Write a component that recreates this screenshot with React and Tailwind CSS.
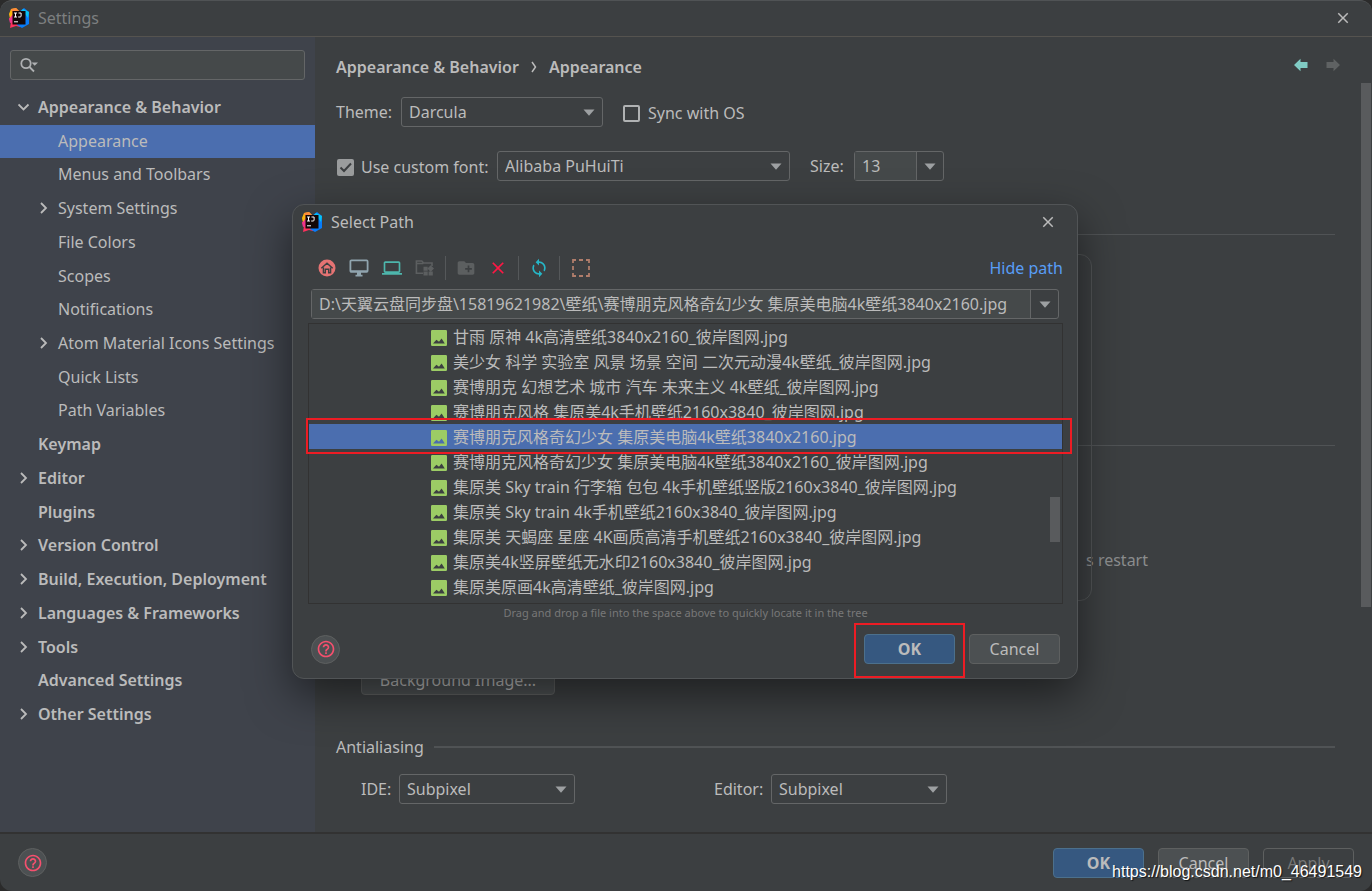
import React from 'react';
import clsx from 'clsx';
import {
  MdClose,
  MdCreateNewFolder,
  MdHelpOutline,
  MdLaptop,
  MdSync,
} from 'react-icons/md';

const menu = [
  { label: 'Appearance & Behavior', level: 0, state: 'open' },
  { label: 'Appearance', level: 1, active: true },
  { label: 'Menus and Toolbars', level: 1 },
  { label: 'System Settings', level: 1, state: 'closed' },
  { label: 'File Colors', level: 1 },
  { label: 'Scopes', level: 1 },
  { label: 'Notifications', level: 1 },
  { label: 'Atom Material Icons Settings', level: 1, state: 'closed' },
  { label: 'Quick Lists', level: 1 },
  { label: 'Path Variables', level: 1 },
  { label: 'Keymap', level: 0 },
  { label: 'Editor', level: 0, state: 'closed' },
  { label: 'Plugins', level: 0 },
  { label: 'Version Control', level: 0, state: 'closed' },
  { label: 'Build, Execution, Deployment', level: 0, state: 'closed' },
  { label: 'Languages & Frameworks', level: 0, state: 'closed' },
  { label: 'Tools', level: 0, state: 'closed' },
  { label: 'Advanced Settings', level: 0 },
  { label: 'Other Settings', level: 0, state: 'closed' },
];

const files = [
  '甘雨 原神 4k高清壁纸3840x2160_彼岸图网.jpg',
  '美少女 科学 实验室 风景 场景 空间 二次元动漫4k壁纸_彼岸图网.jpg',
  '赛博朋克 幻想艺术 城市 汽车 未来主义 4k壁纸_彼岸图网.jpg',
  '赛博朋克风格 集原美4k手机壁纸2160x3840_彼岸图网.jpg',
  '赛博朋克风格奇幻少女 集原美电脑4k壁纸3840x2160.jpg',
  '赛博朋克风格奇幻少女 集原美电脑4k壁纸3840x2160_彼岸图网.jpg',
  '集原美 Sky train 行李箱 包包 4k手机壁纸竖版2160x3840_彼岸图网.jpg',
  '集原美 Sky train 4k手机壁纸2160x3840_彼岸图网.jpg',
  '集原美 天蝎座 星座 4K画质高清手机壁纸2160x3840_彼岸图网.jpg',
  '集原美4k竖屏壁纸无水印2160x3840_彼岸图网.jpg',
  '集原美原画4k高清壁纸_彼岸图网.jpg',
];
const selectedFile = files[4];

function Logo() {
  return (
    <svg viewBox="0 0 20 20" className="w-5 h-5 shrink-0" aria-hidden="true">
      <path d="M0 6 2 1 7 0l4 4-5 8-5-1Z" fill="#fdb60d" />
      <path d="M2 1 7 0l4 4-7 3Z" fill="#ff8a3c" />
      <path d="M0 10h6l7 8-2 1-4-1-6 2 1-6Z" fill="#fe315d" />
      <path d="M0 11 5 5v9l-4 1Z" fill="#f0348b" />
      <path d="m10 4 5-4 5 4v12l-7 4-5-3Z" fill="#087cfa" />
      <path d="m14 1 6 3-1 6-3-4-5-2Z" fill="#07c3f2" />
      <rect x="3.5" y="3" width="13" height="13.5" fill="#120708" />
      <path d="M5 5h3M6.5 5v4M5 9h3M9.5 5h2.6v3q0 1-1 1H9.2" stroke="#fff" strokeWidth="1" fill="none" />
      <path d="M5 13.8h4" stroke="#fff" strokeWidth="1" />
    </svg>
  );
}

function Chevron({ open }) {
  return (
    <svg viewBox="0 0 12 12" className="w-3 h-3" fill="none" stroke="#bbbbbb" strokeWidth="1.8" aria-hidden="true">
      <path d={open ? 'M0.5 3.5 5.5 8.5l5-5' : 'M3 1 8 6l-5 5'} />
    </svg>
  );
}

function Triangle() {
  return (
    <svg viewBox="0 0 12 7" className="w-3 h-[7px]" fill="#9da0a2" aria-hidden="true">
      <path d="M0.5 0.5h11L6 6.7Z" />
    </svg>
  );
}

function ImageIcon() {
  return (
    <svg viewBox="0 0 16 16" className="w-4 h-4 shrink-0" aria-hidden="true">
      <path
        fillRule="evenodd"
        fill="#9ccc65"
        d="M1.2 0h13.6Q16 0 16 1.2v13.6q0 1.2-1.2 1.2H1.2Q0 16 0 14.8V1.2Q0 0 1.2 0ZM2 13.4h11.8L10.6 8.4 8 11.8 5.4 9.8Z"
      />
    </svg>
  );
}

function HomeIcon() {
  return (
    <svg viewBox="0 0 18 18" className="w-[18px] h-[18px]" aria-hidden="true">
      <circle cx="9" cy="9" r="8.5" fill="#e57373" />
      <path d="M3.3 9.3 9 4.2l5.7 5.1M5.4 8.6v5.2h1.9v-3.6h3.4v3.6h1.9V8.6" fill="none" stroke="#3c3f41" strokeWidth="1.4" />
    </svg>
  );
}

function DesktopIcon() {
  return (
    <svg viewBox="0 0 20 18" className="w-5 h-[18px]" fill="none" stroke="#90a4ae" strokeWidth="1.8" aria-hidden="true">
      <rect x="1.4" y="1.4" width="17.2" height="11.4" rx="1" />
      <path d="M1.4 12.2h17.2M6.5 16.6h7" />
      <path d="M8 13h4v4H8z" fill="#90a4ae" stroke="none" />
    </svg>
  );
}

function ModuleIcon() {
  return (
    <svg viewBox="0 0 20 18" className="w-5 h-[18px]" fill="none" stroke="#5c5f60" strokeWidth="1.6" aria-hidden="true">
      <path d="M8 14.2H1.4V2h5.4l1.8 2H17v3M1.4 4.5h7" />
      <path d="M8.5 7.8h4.2v4H8.5zM8.5 12.6h4.2v4H8.5zM13.6 12.6h4.2v4h-4.2z" fill="#5c5f60" stroke="none" />
      <path d="m15.7 6.3 3.3 3.3-3.3 3.3-3.3-3.3Z" fill="#5c5f60" stroke="none" />
    </svg>
  );
}

function DashedSquare() {
  return (
    <svg viewBox="0 0 18 18" className="w-[18px] h-[18px]" fill="none" stroke="#b07d6b" strokeWidth="1.8" aria-hidden="true">
      <path d="M1 4V1h3M7 1h4M14 1h3v3M17 7v4M17 14v3h-3M11 17H7M4 17H1v-3M1 11V7" />
    </svg>
  );
}

function Arrow({ className, flip }) {
  return (
    <svg viewBox="0 0 14 14" className={clsx('w-3.5 h-3.5', className)} fill="currentColor" aria-hidden="true">
      <path d={flip ? 'M14 7 7.5.8V4H.5v6h7v3.2Z' : 'M0 7 6.5.8V4h7v6h-7v3.2Z'} />
    </svg>
  );
}

function Select({ id, label, value, className }) {
  return (
    <span className={clsx('relative inline-flex items-center', className)}>
      <select
        id={id}
        aria-label={label}
        defaultValue={value}
        className="appearance-none w-full h-[30px] rounded-[3px] border border-[#646667] bg-[#3c3f41] pl-[7px] text-base text-[#bbbbbb]"
      >
        <option>{value}</option>
      </select>
      <span className="absolute right-2 pointer-events-none flex">
        <Triangle />
      </span>
    </span>
  );
}

function Button({ children, variant = 'default', className = 'w-[91px]' }) {
  return (
    <button
      type="button"
      className={clsx(
        'h-[30px] rounded border text-base leading-none',
        variant === 'primary' && 'bg-[#365880] border-[#4c708c] text-[#bbbbbb] font-bold',
        variant === 'default' && 'bg-[#4c5052] border-[#5e6060] text-[#bbbbbb]',
        variant === 'disabled' && 'bg-[#3c3f41] border-[#5e6060] text-[#777777]',
        className
      )}
    >
      {children}
    </button>
  );
}

function HelpButton() {
  return (
    <button
      type="button"
      aria-label="Help"
      className="flex w-[29px] h-[29px] items-center justify-center rounded-full border border-[#5e6060] bg-[#4c5052] text-[#f5506e]"
    >
      <MdHelpOutline className="w-5 h-5" />
    </button>
  );
}

function Sidebar() {
  return (
    <aside className="w-[315px] shrink-0 bg-[#3f434b]">
      <div className="relative mx-2.5 mt-[13px] flex items-center">
        <input
          type="search"
          aria-label="Search settings"
          className="h-[30px] w-full rounded-[3px] border border-[#646667] bg-[#45494a] pl-9 text-base text-[#bbbbbb]"
        />
        <svg viewBox="0 0 18 16" className="absolute left-2.5 w-[18px] h-4" fill="none" stroke="#afb1b3" strokeWidth="1.8" aria-hidden="true">
          <circle cx="6" cy="6.5" r="4.7" />
          <path d="m9.5 10 4.5 4.5" />
          <path d="M11.5 5.5H18L14.7 8.8Z" fill="#afb1b3" stroke="none" />
        </svg>
      </div>
      <ul className="mt-[11px] grid h-[641px] auto-rows-fr">
        {menu.map((item) => (
          <li key={item.label}>
            <a
              href="#"
              className={clsx(
                'flex h-full items-center pb-0.5 text-base text-[#bbbbbb]',
                item.level === 0 ? 'pl-[18px] font-semibold' : 'pl-[38px]',
                item.active && 'bg-[#4b6eaf]'
              )}
            >
              <span className="w-5 shrink-0">{item.state && <Chevron open={item.state === 'open'} />}</span>
              {item.label}
            </a>
          </li>
        ))}
      </ul>
    </aside>
  );
}

function AppearancePage() {
  return (
    <main className="relative flex-1 pl-[21px] pr-[37px] text-base text-[#bbbbbb]">
      <div className="-mr-[5px] flex h-[60px] items-center justify-between">
        <div className="flex items-center gap-3 font-semibold">
          <span>Appearance &amp; Behavior</span>
          <svg viewBox="0 0 6 12" className="w-1.5 h-3" fill="none" stroke="#bbbbbb" strokeWidth="1.5" aria-hidden="true">
            <path d="m1 1 3.5 5L1 11" />
          </svg>
          <span>Appearance</span>
        </div>
        <div className="flex gap-[18px] pb-1">
          <button type="button" aria-label="Back"><Arrow className="text-[#80cbc4]" /></button>
          <button type="button" aria-label="Forward"><Arrow flip className="text-[#5f6263]" /></button>
        </div>
      </div>

      <div className="flex items-center">
        <label htmlFor="theme" className="w-[65px]">Theme:</label>
        <Select id="theme" value="Darcula" className="w-[202px]" />
        <label className="ml-5 flex items-center gap-2 pt-0.5">
          <input type="checkbox" className="appearance-none w-[17px] h-[17px] border-2 border-[#b0b2b3] rounded-[2px]" />
          Sync with OS
        </label>
      </div>

      <div className="mt-6 flex items-center">
        <label className="flex w-[161px] items-center gap-[7px] pl-px pt-0.5">
          <span className="relative flex">
            <input type="checkbox" defaultChecked className="appearance-none w-[17px] h-[17px] bg-[#9a9c9d] rounded-[2px]" />
            <svg viewBox="0 0 17 17" className="absolute inset-0 pointer-events-none" fill="none" stroke="#3c3f41" strokeWidth="2" aria-hidden="true">
              <path d="m3.5 8.5 3.5 3.5L14 4.5" />
            </svg>
          </span>
          Use custom font:
        </label>
        <Select id="font" label="Font" value="Alibaba PuHuiTi" className="w-[293px]" />
        <label htmlFor="size" className="ml-5 w-11">Size:</label>
        <div className="flex h-[30px] w-[90px] rounded-[3px] border border-[#646667]">
          <input id="size" defaultValue="13" className="w-[61px] bg-[#45494a] pl-[7px]" />
          <button type="button" aria-label="Size list" className="flex flex-1 items-center justify-center border-l border-[#646667]">
            <Triangle />
          </button>
        </div>
      </div>

      <div className="mt-[53px] h-[211px] border-t border-[#505355]" />
      <div className="h-[220px] border-t border-[#505355] pt-[102px] pr-[187px] text-right text-[#8b8d8e]">s restart</div>
      <Button className="ml-[25px] w-[194px]">Background Image...</Button>

      <div className="mt-10 flex items-center gap-2.5">
        <span>Antialiasing</span>
        <span className="h-0.5 flex-1 bg-[#505355]" />
      </div>
      <div className="mt-[15px] flex items-center pl-[25px]">
        <label htmlFor="ide" className="w-[38px]">IDE:</label>
        <Select id="ide" value="Subpixel" className="w-[176px]" />
        <label htmlFor="editor" className="ml-[139px] w-[57px]">Editor:</label>
        <Select id="editor" value="Subpixel" className="w-[176px]" />
      </div>

      <div className="absolute right-px top-[46px] h-[524px] w-2.5 bg-[#595b5d]" />
    </main>
  );
}

function PathDialog() {
  return (
    <section
      role="dialog"
      aria-label="Select Path"
      className="relative w-[786px] rounded-xl border border-[#515456] bg-[#3c3f41] pl-[15px] pr-3.5 pb-3.5 text-base text-[#bbbbbb] shadow-[0_16px_44px_rgba(0,0,0,0.5)]"
    >
      <header className="-ml-1.5 flex h-[35px] items-center gap-[9px] pb-0.5 pr-1.5">
        <Logo />
        <h2 className="flex-1">Select Path</h2>
        <button type="button" aria-label="Close dialog">
          <MdClose className="w-[18px] h-[18px]" />
        </button>
      </header>

      <div className="mt-4 flex h-6 items-center pl-2.5">
        <div className="flex items-center gap-[13px]">
          <button type="button" aria-label="Home"><HomeIcon /></button>
          <button type="button" aria-label="Desktop"><DesktopIcon /></button>
          <button type="button" aria-label="Project" className="text-[#4db6ac]"><MdLaptop className="w-5 h-5" /></button>
          <button type="button" aria-label="Module"><ModuleIcon /></button>
        </div>
        <span className="mx-2.5 h-6 w-px bg-[#55585a]" />
        <div className="flex items-center gap-3">
          <button type="button" aria-label="New folder" className="text-[#5c5f60]"><MdCreateNewFolder className="w-5 h-5" /></button>
          <button type="button" aria-label="Delete" className="text-[#ff1744]"><MdClose className="w-5 h-5" /></button>
        </div>
        <span className="mx-2.5 h-6 w-px bg-[#55585a]" />
        <button type="button" aria-label="Refresh" className="text-[#26b6c6]"><MdSync className="w-5 h-5" /></button>
        <span className="mx-2.5 h-6 w-px bg-[#55585a]" />
        <button type="button" aria-label="Show hidden files" className="ml-0.5"><DashedSquare /></button>
        <a href="#" className="ml-auto text-[#589df6]">Hide path</a>
      </div>

      <div className="mt-[9px] ml-[3px] mr-1 flex h-[30px] rounded-[3px] border border-[#646667]">
        <input
          aria-label="Path"
          defaultValue={'D:\\天翼云盘同步盘\\15819621982\\壁纸\\' + selectedFile}
          className="min-w-0 flex-1 bg-[#45494a] pl-[7px]"
        />
        <button type="button" aria-label="Recent paths" className="flex w-7 items-center justify-center border-l border-[#646667]">
          <Triangle />
        </button>
      </div>

      <div className="relative mt-1 border border-[#323232] pb-1">
        <ul>
          {files.map((file) => (
            <li
              key={file}
              className={clsx('relative flex h-[25px] items-center gap-1.5 pl-[122px] pt-0.5', file === selectedFile && 'bg-[#4b6eaf]')}
            >
              <ImageIcon />
              <span className="whitespace-nowrap leading-[23px]">{file}</span>
              {file === selectedFile && (
                <span className="absolute -left-[3px] -right-2.5 -top-1.5 -bottom-[5px] z-10 border-2 border-[#ed1c24]" />
              )}
            </li>
          ))}
        </ul>
        <div className="absolute right-0.5 top-[173px] h-[45px] w-2.5 bg-[#595b5d]" />
      </div>
      <p className="mt-px text-center text-[11px] leading-4 text-[#787878]">
        Drag and drop a file into the space above to quickly locate it in the tree
      </p>

      <footer className="mt-[13px] flex items-center justify-between pl-[3px] pr-[3px]">
        <HelpButton />
        <div className="flex gap-3.5">
          <div className="relative">
            <Button variant="primary">OK</Button>
            <span className="absolute -inset-x-2.5 -top-[11px] -bottom-3.5 border-2 border-[#ed1c24]" />
          </div>
          <Button>Cancel</Button>
        </div>
      </footer>
    </section>
  );
}

export default function App() {
  return (
    <div className="relative flex min-h-screen flex-col overflow-hidden bg-[#2b2b2b] font-['Noto_Sans','Noto_Sans_CJK_SC',sans-serif]">
      <div className="flex flex-1 flex-col overflow-hidden rounded-xl border-t border-[#505355] bg-[#3c3f41]">
        <header className="flex h-9 items-center gap-[9px] border-b border-[#55534f] pb-0.5 pl-[9px] pr-5 text-base text-[#7d7f80]">
          <Logo />
          <h1 className="flex-1">Settings</h1>
          <button type="button" aria-label="Close" className="text-[#bbbbbb]">
            <MdClose className="w-[18px] h-[18px]" />
          </button>
        </header>
        <div className="flex flex-1">
          <Sidebar />
          <AppearancePage />
        </div>
        <footer className="flex h-[59px] items-center justify-between border-t-2 border-[#323232] pl-[18px] pr-[18px]">
          <HelpButton />
          <div className="flex gap-3.5">
            <Button variant="primary">OK</Button>
            <Button>Cancel</Button>
            <Button variant="disabled">Apply</Button>
          </div>
        </footer>
      </div>

      <div className="absolute inset-0 flex items-start justify-center pt-[204px] pr-0.5">
        <div className="relative">
          <div className="absolute left-6 -right-3.5 top-[50px] h-[347px] rounded-xl border border-[#515456]" />
          <PathDialog />
        </div>
      </div>

      <span className="absolute right-2.5 bottom-[7px] font-['Liberation_Sans',sans-serif] text-base text-white [text-shadow:1px_1px_1px_rgba(0,0,0,0.7)]">
        https://blog.csdn.net/m0_46491549
      </span>
    </div>
  );
}
